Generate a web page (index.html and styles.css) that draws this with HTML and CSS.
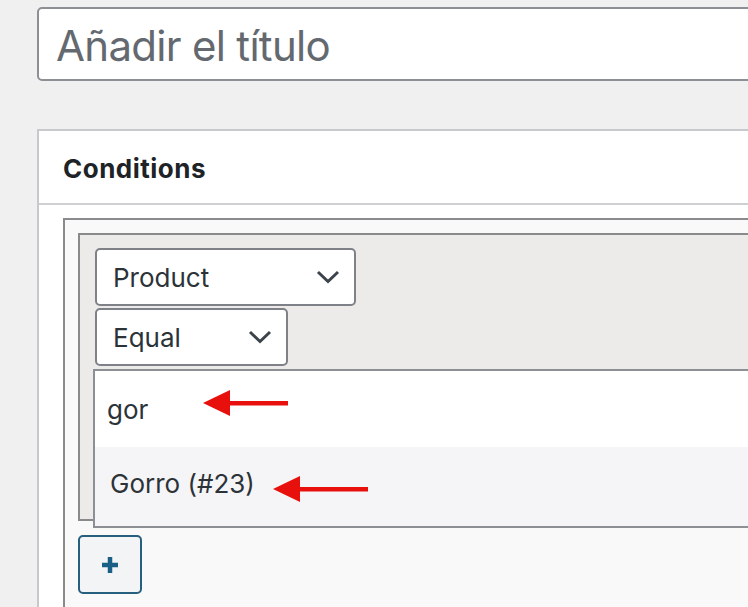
FILE: index.html
```html
<!DOCTYPE html>
<html lang="es">
<head>
<meta charset="utf-8">
<title>Conditions</title>
<link rel="stylesheet" href="styles.css">
</head>
<body>
<div class="page">
  <div class="title-input">Añadir el título</div>

  <div class="postbox">
    <div class="postbox-header">Conditions</div>
    <div class="postbox-body">
      <div class="group-outer">
        <div class="group-inner">
          <div class="select select-product">
            <span>Product</span>
            <svg class="chev" width="24" height="14" viewBox="0 0 24 14"><polyline points="2,2 12,11.5 22,2" fill="none" stroke="#3c434a" stroke-width="3"/></svg>
          </div>
          <div class="select select-equal">
            <span>Equal</span>
            <svg class="chev" width="24" height="14" viewBox="0 0 24 14"><polyline points="2,2 12,11.5 22,2" fill="none" stroke="#3c434a" stroke-width="3"/></svg>
          </div>
          <div class="dropdown">
            <div class="dd-search">gor</div>
            <div class="dd-result">Gorro (#23)</div>
          </div>
        </div>
        <button class="add-btn" type="button">
          <svg width="20" height="20" viewBox="0 0 20 20"><path d="M10 2v16M2 10h16" stroke="#1a5f85" stroke-width="4.5" fill="none"/></svg>
        </button>
      </div>
    </div>
  </div>

  <svg class="arrow arrow-1" width="92" height="30" viewBox="0 0 92 30"><polygon points="3,15 30,2 30,28" fill="#e8100c"/><rect x="28" y="13" width="60" height="4.5" fill="#e8100c"/></svg>
  <svg class="arrow arrow-2" width="100" height="30" viewBox="0 0 100 30"><polygon points="3,15 30,2 30,28" fill="#e8100c"/><rect x="28" y="13" width="70" height="4.5" fill="#e8100c"/></svg>
</div>
</body>
</html>
```

FILE: styles.css
```css
html, body {
  margin: 0;
  padding: 0;
  background: #f0f0f1;
  overflow: hidden;
}

body {
  font-family: Inter, "Liberation Sans", Arial, sans-serif;
  color: #2c3338;
}

.page {
  position: relative;
  width: 760px;
  height: 607px;
  padding: 7px 0 0 37px;
  box-sizing: border-box;
}

.title-input {
  box-sizing: border-box;
  width: 760px;
  height: 74px;
  background: #fff;
  border: 2px solid #8c8f94;
  border-radius: 5px;
  display: flex;
  align-items: center;
  padding: 3px 0 0 17px;
  font-size: 42px;
  color: #646970;
  letter-spacing: -0.7px;
}

.postbox {
  margin-top: 48px;
  width: 760px;
  background: #fff;
  border: 2px solid #c8c9cc;
  box-sizing: border-box;
}

.postbox-header {
  height: 74px;
  border-bottom: 2px solid #cfd0d2;
  display: flex;
  align-items: center;
  padding: 2px 0 0 24px;
  box-sizing: border-box;
  font-size: 26px;
  font-weight: 700;
  color: #1d2327;
  letter-spacing: 0.5px;
}

.postbox-body {
  padding: 13px 0 0 24px;
}

.group-outer {
  border: 2px solid #8a8a8c;
  border-right: none;
  background: #f9f9f9;
  padding: 13px 0 20px 13px;
  height: 420px;
}

.group-inner {
  position: relative;
  box-sizing: border-box;
  height: 288px;
  border: 2px solid #8a8a8c;
  border-right: none;
  background: #ecebe9;
  padding: 13px 0 0 15px;
  display: flex;
  flex-direction: column;
  align-items: flex-start;
  gap: 2px;
}

.select {
  box-sizing: border-box;
  height: 58px;
  background: #fff;
  border: 2px solid #7e8288;
  border-radius: 5px;
  display: flex;
  align-items: center;
  justify-content: space-between;
  padding: 0 14px 0 16px;
  font-size: 26px;
  color: #2c3338;
}

.select-product { width: 261px; }
.select-equal { width: 193px; }

.chev { display: block; }

.dropdown {
  position: absolute;
  left: 13px;
  top: 134px;
  width: 700px;
  box-sizing: border-box;
  border: 2px solid #8c8f94;
  border-right: none;
  background: #fff;
}

.dd-search {
  height: 76px;
  box-sizing: border-box;
  padding: 23px 0 0 12px;
  font-size: 26px;
  color: #2c3338;
  background: #fff;
}

.dd-result {
  height: 79px;
  box-sizing: border-box;
  padding: 21px 0 0 15px;
  font-size: 26px;
  color: #2c3338;
  background: #f5f5f7;
}

.add-btn {
  margin-top: 14px;
  width: 64px;
  height: 59px;
  box-sizing: border-box;
  border: 2px solid #26607e;
  border-radius: 5px;
  background: #f2f4f6;
  display: flex;
  align-items: center;
  justify-content: center;
  padding: 0;
}

.arrow {
  position: absolute;
  display: block;
}

.arrow-1 { left: 200px; top: 388px; }
.arrow-2 { left: 270px; top: 474px; }
```
